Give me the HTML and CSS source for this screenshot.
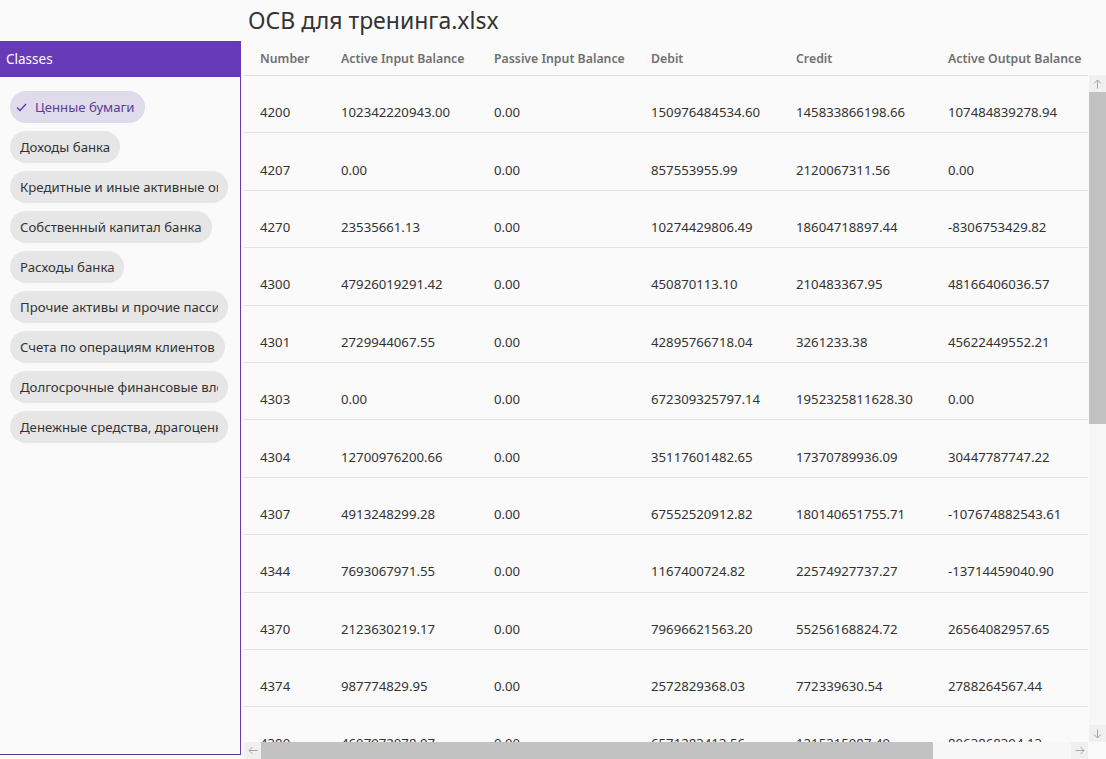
FILE: index.html
```html
<!DOCTYPE html>
<html lang="ru">
<head>
<meta charset="utf-8">
<title>ОСВ для тренинга.xlsx</title>
<link rel="stylesheet" href="styles.css">
</head>
<body>
<div class="app">
  <div class="corner"></div>
  <h1 class="title">ОСВ для тренинга.xlsx</h1>

  <aside class="sidebar">
    <div class="side-head">Classes</div>
    <div class="chips">
      <div class="chip chip-on">
        <svg class="check" width="11" height="9" viewBox="0 0 11 9"><polyline points="1,4.5 4,7.5 10,1" fill="none" stroke="#5b3c9e" stroke-width="1.3"/></svg>
        <span>Ценные бумаги</span>
      </div>
      <div class="chip"><span>Доходы банка</span></div>
      <div class="chip"><span>Кредитные и иные активные операции</span></div>
      <div class="chip"><span>Собственный капитал банка</span></div>
      <div class="chip"><span>Расходы банка</span></div>
      <div class="chip"><span>Прочие активы и прочие пассивы</span></div>
      <div class="chip"><span>Счета по операциям клиентов</span></div>
      <div class="chip"><span>Долгосрочные финансовые вложения</span></div>
      <div class="chip"><span>Денежные средства, драгоценные металлы</span></div>
    </div>
  </aside>

  <section class="grid">
    <div class="thead">
      <div class="row head-row">
        <div class="cell">Number</div>
        <div class="cell">Active Input Balance</div>
        <div class="cell">Passive Input Balance</div>
        <div class="cell">Debit</div>
        <div class="cell">Credit</div>
        <div class="cell">Active Output Balance</div>
        <div class="cell">Passive Output Balance</div>
      </div>
    </div>
    <div class="head-spacer"></div>

    <div class="tbody">
      <div class="row"><div class="cell">4200</div><div class="cell">102342220943.00</div><div class="cell">0.00</div><div class="cell">150976484534.60</div><div class="cell">145833866198.66</div><div class="cell">107484839278.94</div><div class="cell">0.00</div></div>
      <div class="row"><div class="cell">4207</div><div class="cell">0.00</div><div class="cell">0.00</div><div class="cell">857553955.99</div><div class="cell">2120067311.56</div><div class="cell">0.00</div><div class="cell">1262513355.57</div></div>
      <div class="row"><div class="cell">4270</div><div class="cell">23535661.13</div><div class="cell">0.00</div><div class="cell">10274429806.49</div><div class="cell">18604718897.44</div><div class="cell">-8306753429.82</div><div class="cell">0.00</div></div>
      <div class="row"><div class="cell">4300</div><div class="cell">47926019291.42</div><div class="cell">0.00</div><div class="cell">450870113.10</div><div class="cell">210483367.95</div><div class="cell">48166406036.57</div><div class="cell">0.00</div></div>
      <div class="row"><div class="cell">4301</div><div class="cell">2729944067.55</div><div class="cell">0.00</div><div class="cell">42895766718.04</div><div class="cell">3261233.38</div><div class="cell">45622449552.21</div><div class="cell">0.00</div></div>
      <div class="row"><div class="cell">4303</div><div class="cell">0.00</div><div class="cell">0.00</div><div class="cell">672309325797.14</div><div class="cell">1952325811628.30</div><div class="cell">0.00</div><div class="cell">0.00</div></div>
      <div class="row"><div class="cell">4304</div><div class="cell">12700976200.66</div><div class="cell">0.00</div><div class="cell">35117601482.65</div><div class="cell">17370789936.09</div><div class="cell">30447787747.22</div><div class="cell">0.00</div></div>
      <div class="row"><div class="cell">4307</div><div class="cell">4913248299.28</div><div class="cell">0.00</div><div class="cell">67552520912.82</div><div class="cell">180140651755.71</div><div class="cell">-107674882543.61</div><div class="cell">0.00</div></div>
      <div class="row"><div class="cell">4344</div><div class="cell">7693067971.55</div><div class="cell">0.00</div><div class="cell">1167400724.82</div><div class="cell">22574927737.27</div><div class="cell">-13714459040.90</div><div class="cell">0.00</div></div>
      <div class="row"><div class="cell">4370</div><div class="cell">2123630219.17</div><div class="cell">0.00</div><div class="cell">79696621563.20</div><div class="cell">55256168824.72</div><div class="cell">26564082957.65</div><div class="cell">0.00</div></div>
      <div class="row"><div class="cell">4374</div><div class="cell">987774829.95</div><div class="cell">0.00</div><div class="cell">2572829368.03</div><div class="cell">772339630.54</div><div class="cell">2788264567.44</div><div class="cell">0.00</div></div>
      <div class="row"><div class="cell">4380</div><div class="cell">4607972078.97</div><div class="cell">0.00</div><div class="cell">6571283413.56</div><div class="cell">1215315987.49</div><div class="cell">8063868394.13</div><div class="cell">0.00</div></div>
    </div>

    <div class="vscroll">
      <div class="sb-btn">
        <svg width="9" height="10" viewBox="0 0 9 10"><path d="M4.5 9.5V1M1 4.5L4.5 1L8 4.5" fill="none" stroke="#a6a6a6" stroke-width="1"/></svg>
      </div>
      <div class="vthumb"></div>
      <div class="sb-track"></div>
      <div class="sb-btn">
        <svg width="9" height="10" viewBox="0 0 9 10"><path d="M4.5 0.5V9M1 5.5L4.5 9L8 5.5" fill="none" stroke="#a6a6a6" stroke-width="1"/></svg>
      </div>
    </div>

    <div class="hscroll">
      <div class="sb-btn">
        <svg width="10" height="9" viewBox="0 0 10 9"><path d="M9.5 4.5H1M4.5 1L1 4.5L4.5 8" fill="none" stroke="#a6a6a6" stroke-width="1"/></svg>
      </div>
      <div class="hthumb"></div>
      <div class="sb-track"></div>
      <div class="sb-btn">
        <svg width="10" height="9" viewBox="0 0 10 9"><path d="M0.5 4.5H9M5.5 1L9 4.5L5.5 8" fill="none" stroke="#a6a6a6" stroke-width="1"/></svg>
      </div>
    </div>
    <div class="sb-corner"></div>
  </section>
</div>
</body>
</html>
```

FILE: styles.css
```css
* {
  box-sizing: border-box;
}

html, body {
  margin: 0;
  padding: 0;
  background: #fafafa;
}

body {
  font-family: "Noto Sans", "Open Sans", "DejaVu Sans", sans-serif;
  color: #333333;
  width: 1106px;
  height: 759px;
  overflow: hidden;
}

.app {
  display: grid;
  grid-template-columns: 244px 1fr;
  grid-template-rows: 41px 718px;
  height: 759px;
}

.corner {
  grid-column: 1;
  grid-row: 1;
}

.title {
  grid-column: 2;
  grid-row: 1;
  margin: 0;
  padding: 0 0 0 4px;
  font-size: 23px;
  font-weight: 400;
  line-height: 41px;
  color: #333333;
  white-space: nowrap;
}

/* Sidebar */
.sidebar {
  grid-column: 1;
  grid-row: 2;
  width: 241px;
  height: 714px;
  border-right: 1px solid #673ab7;
  border-bottom: 1px solid #5c3a8f;
  display: flex;
  flex-direction: column;
}

.side-head {
  height: 36px;
  background: #673ab7;
  color: #ffffff;
  font-size: 13.5px;
  display: flex;
  align-items: center;
  padding-left: 6px;
}

.chips {
  display: flex;
  flex-direction: column;
  align-items: flex-start;
  gap: 8px;
  padding: 14px 10px;
}

.chip {
  display: flex;
  align-items: center;
  gap: 8px;
  height: 32px;
  max-width: 218px;
  padding: 0 10px;
  border-radius: 16px;
  background: #e6e6e6;
  color: #333333;
  font-size: 13.2px;
  white-space: nowrap;
  overflow: hidden;
}

.chip span {
  overflow: hidden;
  display: block;
}

.chip-on {
  background: #e0dbea;
  color: #5b3c9e;
  padding-left: 6px;
}

.check {
  flex: none;
}

/* Table */
.grid {
  grid-column: 2;
  grid-row: 1 / span 2;
  margin-top: 41px;
  display: grid;
  grid-template-columns: 844px 18px;
  grid-template-rows: 35px 666px 17px;
  height: 718px;
}

.thead {
  grid-column: 1;
  grid-row: 1;
  overflow: hidden;
  border-bottom: 1px solid #e0e0e0;
}

.head-spacer {
  grid-column: 2;
  grid-row: 1;
}

.row {
  display: grid;
  grid-template-columns: 81px 153px 157px 145px 152px 160px 160px;
  width: 1008px;
  align-items: center;
}

.head-row {
  height: 34px;
  font-size: 12.3px;
  font-weight: 600;
  color: #707070;
}

.cell {
  padding-left: 16px;
  white-space: nowrap;
}

.tbody {
  grid-column: 1;
  grid-row: 2;
  overflow: hidden;
  font-size: 13.2px;
  color: #333333;
}

.tbody .row {
  height: 57.4px;
  padding-top: 16px;
  border-bottom: 1px solid #e3e3e3;
}

/* Scrollbars */
.vscroll {
  grid-column: 2;
  grid-row: 2;
  display: flex;
  flex-direction: column;
  margin-top: -1px;
  padding-left: 1px;
}

.hscroll {
  grid-column: 1;
  grid-row: 3;
  display: flex;
}

.sb-btn {
  flex: none;
  width: 17px;
  height: 17px;
  background: #f0f0f0;
  display: flex;
  align-items: center;
  justify-content: center;
}

.sb-track {
  flex: 1;
  background: #f7f7f7;
}

.vthumb {
  flex: none;
  height: 332px;
  background: #c2c2c2;
}

.hthumb {
  flex: none;
  width: 672px;
  background: #c2c2c2;
}

.sb-corner {
  grid-column: 2;
  grid-row: 3;
}
```
